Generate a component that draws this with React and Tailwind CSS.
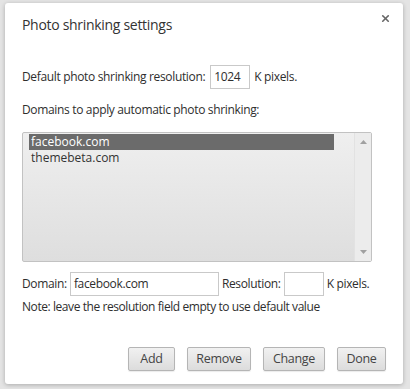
import { X } from 'lucide-react';

const font = { fontFamily: '"Open Sans", "Noto Sans", sans-serif' };

function Btn({ children, w }) {
  return (
    <button
      className={`h-[24px] ${w} rounded-[2px] border border-[#b5b5b5] bg-gradient-to-b from-[#f1f1f1] to-[#dcdcdc] text-[12.5px] tracking-[-0.3px] text-[#444] shadow-[0_1px_1px_rgba(0,0,0,0.08)]`}
    >
      {children}
    </button>
  );
}

function ListBox() {
  return (
    <div className="flex h-[130px] w-[350px] rounded-[2px] border border-[#c2c2c2] bg-gradient-to-b from-[#efefef] to-[#dedede]">
      <div className="flex-1 pl-[6px] pt-[1px] pr-[20px] text-[12px] leading-[16px] text-[#333]">
        <div className="bg-[#6b6b6b] pl-[2px] text-white">facebook.com</div>
        <div className="pl-[2px]">themebeta.com</div>
      </div>
      <div className="flex w-[17px] flex-col items-center justify-between border-l border-[#e2e2e2] bg-[#ececec] py-[7px]">
        <svg width="7" height="4" viewBox="0 0 7 4"><path d="M0 4 L3.5 0 L7 4 Z" fill="#a0a0a0" /></svg>
        <svg width="7" height="4" viewBox="0 0 7 4"><path d="M0 0 L3.5 4 L7 0 Z" fill="#a0a0a0" /></svg>
      </div>
    </div>
  );
}

export default function App() {
  return (
    <div className="h-[389px] w-[410px] bg-[#e4e4e4] pl-[5px] pt-[3px]" style={font}>
      <div className="relative flex h-[381px] w-[398px] flex-col rounded-[3px] bg-white pl-[17px] shadow-[0_1px_4px_rgba(0,0,0,0.25)]">
        <X className="absolute right-[12px] top-[10px] h-[11px] w-[11px] text-[#666]" strokeWidth={3.5} />
        <h1 className="mt-[12px] text-[14px] leading-[20px] tracking-[-0.3px] text-[#333]">Photo shrinking settings</h1>

        <div className="mt-[30px] flex h-[24px] items-center text-[12px] tracking-[-0.34px] text-[#2e2e2e]">
          <span>Default photo shrinking resolution:</span>
          <div className="ml-[5px] flex h-[24px] w-[40px] items-center border border-[#c9c9c9] px-[3px]">1024</div>
          <span className="ml-[4px]">K pixels.</span>
        </div>

        <div className="mt-[12px] text-[12px] leading-[18px] tracking-[-0.34px] text-[#2e2e2e]">Domains to apply automatic photo shrinking:</div>

        <div className="mt-[13px]">
          <ListBox />
        </div>

        <div className="mt-[10px] flex h-[24px] items-center text-[12px] tracking-[-0.34px] text-[#2e2e2e]">
          <span>Domain:</span>
          <div className="ml-[3px] flex h-[24px] w-[149px] items-center border border-[#c9c9c9] px-[3px]">facebook.com</div>
          <span className="ml-[3px]">Resolution:</span>
          <div className="ml-[3px] h-[24px] w-[40px] border border-[#c9c9c9]" />
          <span className="ml-[3px]">K pixels.</span>
        </div>

        <div className="mt-[3px] text-[12px] leading-[16px] tracking-[-0.43px] text-[#2e2e2e]">Note: leave the resolution field empty to use default value</div>

        <div className="mt-[32px] flex justify-end gap-[12px] pr-[17px]">
          <Btn w="w-[47px]">Add</Btn>
          <Btn w="w-[64px]">Remove</Btn>
          <Btn w="w-[62px]">Change</Btn>
          <Btn w="w-[49px]">Done</Btn>
        </div>
      </div>
    </div>
  );
}
